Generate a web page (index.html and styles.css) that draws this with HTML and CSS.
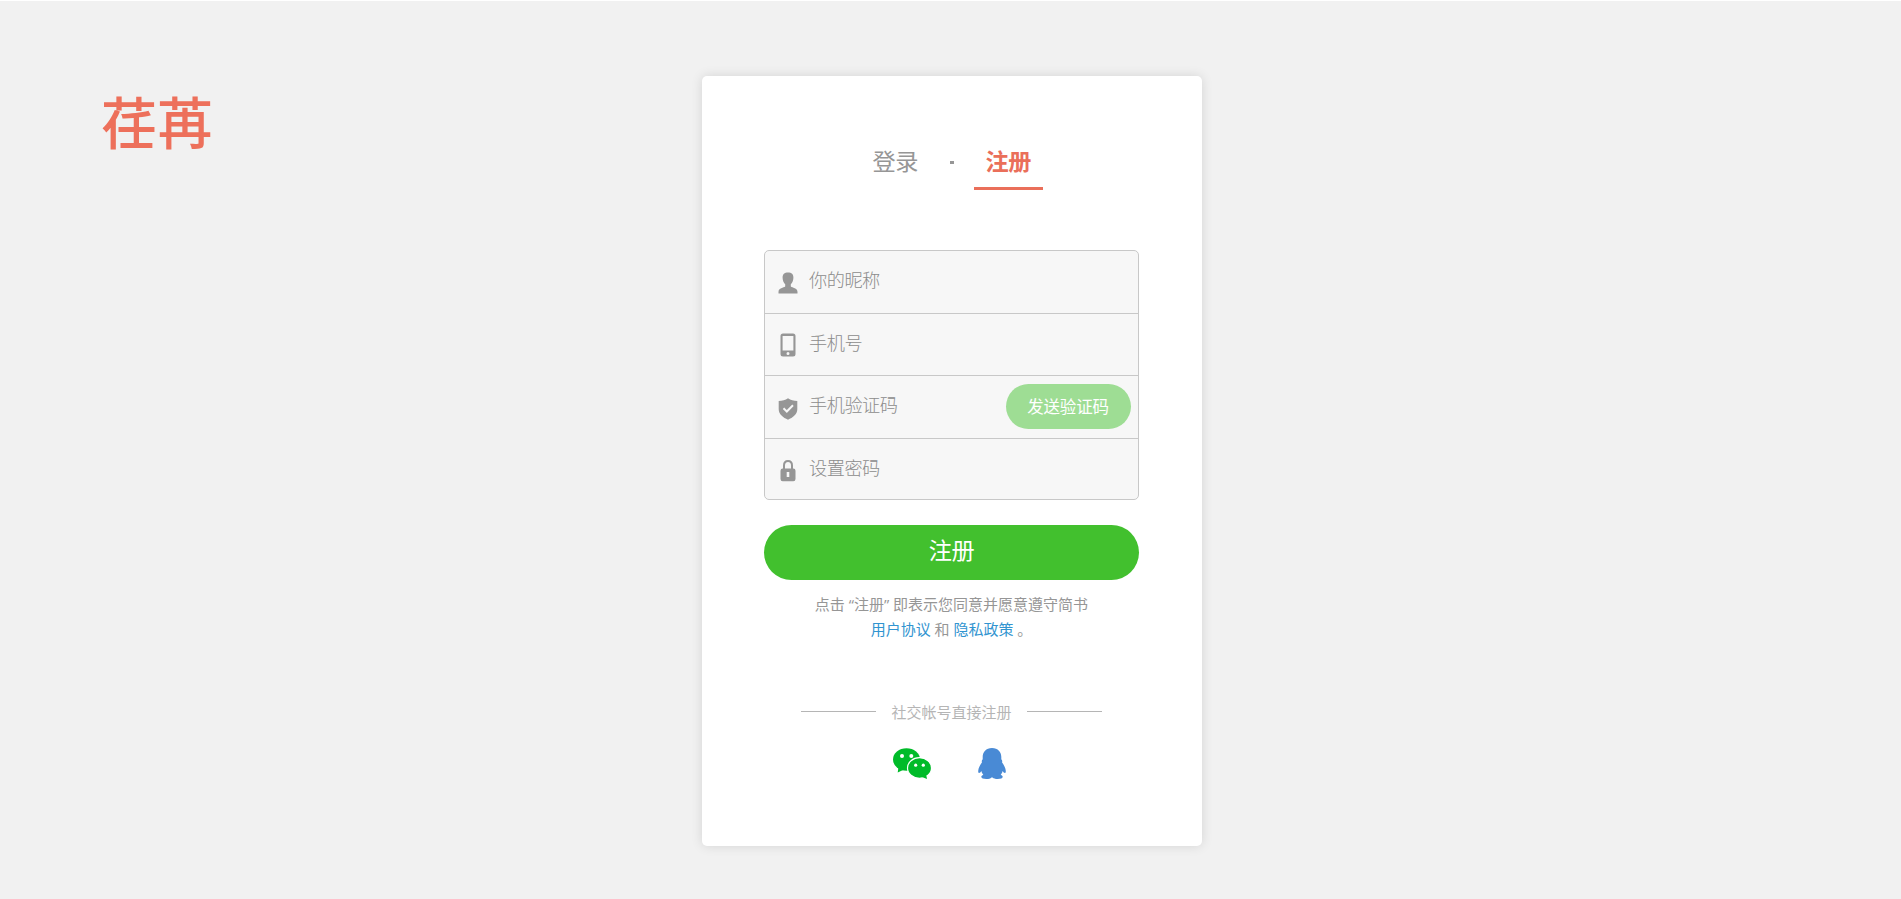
FILE: index.html
```html
<!DOCTYPE html>
<html lang="zh-CN">
<head>
<meta charset="utf-8">
<title>注册</title>
<link rel="stylesheet" href="styles.css">
</head>
<body>
<div class="page">
  <a class="logo">荏苒</a>
  <main class="card">
    <nav class="tabs">
      <a class="tab">登录</a>
      <b class="dot"></b>
      <a class="tab active">注册</a>
    </nav>
    <form class="form">
      <div class="fields">
        <label class="field">
          <svg class="icon" viewBox="0 0 20 24"><path d="M10 1.500c3.600 0 5.500 1.900 5.400 5.200-.1 2.600-1 5.200-2.600 6.600v2.300c1.500 1.200 6.700 1.700 6.700 5.300v1.600H.5v-1.600c0-3.600 5.200-4.100 6.700-5.300v-2.300C5.600 11.900 4.700 9.300 4.600 6.700 4.500 3.400 6.400 1.500 10 1.500z"/></svg>
          <span class="hint">你的昵称</span>
        </label>
        <label class="field">
          <svg class="icon phone" viewBox="0 0 20 24"><path fill-rule="evenodd" d="M5 .5h10a2.500 2.500 0 0 1 2.500 2.500v18a2.500 2.500 0 0 1-2.500 2.500H5A2.500 2.500 0 0 1 2.500 21V3A2.500 2.500 0 0 1 5 .5zM4.600 3v14.500h10.800V3zM10 19a1.500 1.500 0 1 0 0 3 1.500 1.500 0 0 0 0-3z"/></svg>
          <span class="hint">手机号</span>
        </label>
        <label class="field">
          <svg class="icon shield" viewBox="0 0 20 24"><path d="M10 1.300c2.600 1.900 5.800 2.700 9.300 2.800v8.200c0 5.100-4.500 8.400-9.300 10.400C5.200 20.700.7 17.400.7 12.300V4.100C4.200 4 7.400 3.200 10 1.300z"/><path class="tick" d="M5.500 11.300l3.300 3.200 6.200-6.300"/></svg>
          <span class="hint">手机验证码</span>
          <span class="send">发送验证码</span>
        </label>
        <label class="field">
          <svg class="icon lock" viewBox="0 0 20 24"><path class="shackle" d="M6 11V6.500C6 3.800 7.700 2 10 2s4 1.800 4 4.500V11"/><path fill-rule="evenodd" d="M4.700 9.500h10.600a2.200 2.200 0 0 1 2.200 2.200v8.300a2.200 2.200 0 0 1-2.200 2.200H4.700A2.200 2.200 0 0 1 2.500 20v-8.300a2.200 2.200 0 0 1 2.200-2.200zM8.700 13v5h2.600v-5z"/></svg>
          <span class="hint">设置密码</span>
        </label>
      </div>
      <button class="submit" type="button">注册</button>
      <p class="terms">点击 “注册” 即表示您同意并愿意遵守简书<br><a class="link">用户协议</a> 和 <a class="link">隐私政策</a> 。</p>
    </form>
    <section class="social">
      <h6 class="social-title">社交帐号直接注册</h6>
      <div class="social-list">
        <svg class="wechat" viewBox="0 0 38 31"><ellipse cx="13.500" cy="11.500" rx="13.500" ry="11.200"/><path d="M5.500 19l-.8 5.500 6.500-3z"/><ellipse class="front" cx="26.500" cy="20" rx="12" ry="10.300"/><path d="M29 29l5 1.900-1-5z"/><g class="eye"><circle cx="9" cy="7.900" r="2"/><circle cx="18.300" cy="7.900" r="2"/><circle cx="22.700" cy="17.200" r="1.600"/><circle cx="30.300" cy="17.200" r="1.600"/></g></svg>
        <svg class="qq" viewBox="0 0 28 31"><path d="M14 0c6 0 9.300 4 9.300 9v2.300c1.100 1 1 2 .8 3.300 1.500 2.200 3.700 5.600 3.700 8.500 0 1.400-.4 2-.9 2-.8 0-1.600-1-2.200-2-.3 1.500-1 2.700-2 3.700 1.200.5 2 1.200 2 2 0 1.500-2 2.200-5 2.200-2.500 0-4.200-.5-5.100-1.500h-1.200C12.500 30.500 10.800 31 8.300 31c-3 0-5-.7-5-2.200 0-.8.8-1.500 2-2-1-1-1.700-2.200-2-3.700-.6 1-1.400 2-2.200 2-.5 0-.9-.6-.9-2 0-2.900 2.200-6.300 3.700-8.500-.2-1.300-.3-2.300.8-3.300V9C4.700 4 8 0 14 0z"/></svg>
      </div>
    </section>
  </main>
</div>
</body>
</html>
```
FILE: styles.css
```css
* { box-sizing: border-box; }
body {
  margin: 0;
  height: 899px;
  overflow: hidden;
  border-top: 1px solid #fff;
  background: #f1f1f1;
  font-family: "Open Sans", "Noto Sans CJK SC", sans-serif;
  color: #969696;
}
.page { position: relative; padding: 75px 0 0 3px; }
.logo {
  position: absolute;
  left: 101px;
  top: 81px;
  font-size: 56px;
  font-weight: 500;
  line-height: 80px;
  color: #ed705b;
}
.card {
  width: 500px;
  height: 770px;
  margin: 0 auto;
  padding: 62px 63px 0 62px;
  background: #fff;
  border-radius: 5px;
  box-shadow: 0 0 12px rgba(0, 0, 0, .12);
}
.tabs { display: flex; justify-content: center; height: 112px; }
.tab { width: 69px; height: 52px; padding: 7px 0 0 12px; font-size: 23.200px; letter-spacing: -.5px; line-height: 33px; }
.active { font-weight: 700; color: #ea6f5a; border-bottom: 3px solid #ea6f5a; }
.dot { width: 4px; height: 3px; margin: 23px 20px 0; background: #969696; }
.fields {
  height: 250px;
  border: 1px solid #c8c8c8;
  border-radius: 5px;
  background: #f7f7f7;
}
.field { display: flex; align-items: center; height: 62.500px; padding: 0 7px 0 14px; border-bottom: 1px solid #c8c8c8; }
.field:last-child { height: 61px; border: 0; }
.icon { width: 20px; height: 24px; margin: 3px 1px 0 -1px; fill: #969696; }
.phone { margin-top: 2px; }
.shield { margin-top: 5px; }
.lock { margin-top: 4px; }
.tick { fill: none; stroke: #f7f7f7; stroke-width: 2; }
.shackle { fill: none; stroke: #969696; stroke-width: 2; }
.hint { margin: 0 0 3px 10px; font-size: 18.200px; letter-spacing: -.5px; line-height: 26px; font-weight: 300; color: #8c8c8c; }
.send {
  width: 125px;
  height: 45px;
  margin-left: auto;
  padding-right: 1px;
  border-radius: 23px;
  background: #9edd94;
  color: #fff;
  font-size: 16.500px;
  letter-spacing: -.2px;
  line-height: 45px;
  text-align: center;
}
.submit {
  display: block;
  width: 375px;
  height: 55px;
  margin: 25px 0 0;
  padding: 0 0 7px;
  border: 0;
  border-radius: 28px;
  background: #42c02e;
  color: #fff;
  font: 23.200px/48px "Noto Sans CJK SC", sans-serif;
  letter-spacing: -.5px;
}
.terms { margin: 12px 0 0; font-size: 15px; line-height: 25px; text-align: center; }
.link { color: #3194d0; }
.social { margin-top: 59px; }
.social-title {
  display: flex;
  align-items: center;
  justify-content: center;
  gap: 15px;
  margin: 0;
  font-size: 15px;
  font-weight: 400;
  line-height: 22px;
  color: #b5b5b5;
}
.social-title::before, .social-title::after { content: ""; width: 75px; height: 1px; margin-bottom: 2px; background: #b5b5b5; }
.social-list { display: flex; gap: 47px; margin: 25px 0 0 129px; }
.wechat { width: 38px; height: 31px; fill: #00bb29; }
.front { stroke: #fff; stroke-width: 1.200; }
.eye { fill: #fff; }
.qq { width: 28px; height: 31px; fill: #498ad5; }
```
